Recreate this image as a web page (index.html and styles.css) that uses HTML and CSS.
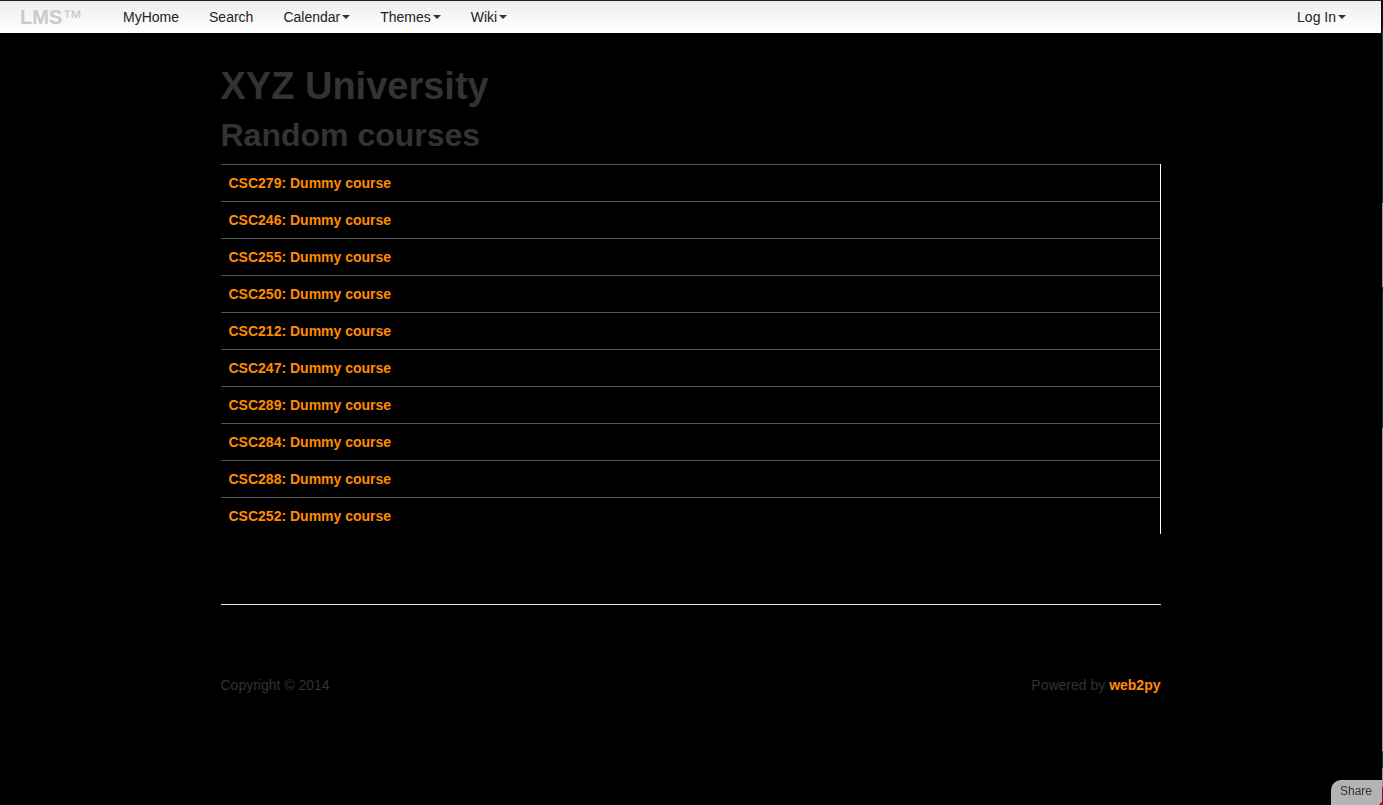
FILE: index.html
```html
<!DOCTYPE html>
<html lang="en">
<head>
<meta charset="utf-8">
<title>LMS</title>
<link rel="stylesheet" href="styles.css">
</head>
<body>
<header class="navbar">
  <a class="brand" href="#">LMS<span class="mark">™</span></a>
  <nav class="menu">
    <a class="item" href="#">MyHome</a>
    <a class="item" href="#">Search</a>
    <a class="item" href="#">Calendar<span class="caret"></span></a>
    <a class="item" href="#">Themes<span class="caret"></span></a>
    <a class="item" href="#">Wiki<span class="caret"></span></a>
  </nav>
  <a class="item login" href="#">Log In<span class="caret"></span></a>
</header>
<main class="container">
  <h1>XYZ University</h1>
  <h2>Random courses</h2>
  <table class="courses">
    <tbody>
      <tr><td><a href="#">CSC279: Dummy course</a></td></tr>
      <tr><td><a href="#">CSC246: Dummy course</a></td></tr>
      <tr><td><a href="#">CSC255: Dummy course</a></td></tr>
      <tr><td><a href="#">CSC250: Dummy course</a></td></tr>
      <tr><td><a href="#">CSC212: Dummy course</a></td></tr>
      <tr><td><a href="#">CSC247: Dummy course</a></td></tr>
      <tr><td><a href="#">CSC289: Dummy course</a></td></tr>
      <tr><td><a href="#">CSC284: Dummy course</a></td></tr>
      <tr><td><a href="#">CSC288: Dummy course</a></td></tr>
      <tr><td><a href="#">CSC252: Dummy course</a></td></tr>
    </tbody>
  </table>
</main>
<footer class="container footer">
  <span>Copyright © 2014</span>
  <span>Powered by <a href="#">web2py</a></span>
</footer>
<button class="share" type="button">Share</button>
<div class="edge"></div>
</body>
</html>
```
FILE: styles.css
```css
* { box-sizing: border-box; }

body {
  margin: 0;
  padding-right: 2px;
  background: #000;
  color: #333;
  font-family: "Liberation Sans", Arial, sans-serif;
  font-size: 14px;
  line-height: 20px;
}

a {
  color: #ff8c00;
  font-weight: bold;
  text-decoration: none;
}

.navbar {
  display: flex;
  align-items: center;
  height: 33px;
  padding: 0 20px;
  border-top: 1px solid #222;
  background: linear-gradient(#eee, #fff);
}

.brand {
  width: 88px;
  color: #c5cccb;
  font-size: 20px;
}

.mark { font-weight: normal; }

.menu { display: flex; }

.item {
  display: flex;
  align-items: center;
  padding: 0 15px;
  color: #222;
  font-weight: normal;
}

.login { margin-left: auto; }

.caret {
  margin-left: 2px;
  border: 4px solid transparent;
  border-top-color: #333;
  border-bottom: 0;
}

.container {
  width: 940px;
  max-width: 100%;
  margin: 0 auto;
}

h1, h2 {
  margin: 0;
  line-height: 40px;
}

h1 {
  padding: 33px 0 9px;
  font-size: 38px;
}

h2 {
  padding-bottom: 9px;
  font-size: 32px;
}

.courses {
  width: 100%;
  border-collapse: separate;
  border-spacing: 0;
  border-right: 1px solid #fff;
}

.courses td {
  padding: 8px;
  border-top: 1px solid #555;
}

.footer {
  display: flex;
  justify-content: space-between;
  margin-top: 70px;
  padding-top: 70px;
  border-top: 1px solid #dde4e3;
}

.share {
  position: fixed;
  right: 1px;
  bottom: 0;
  height: 25px;
  padding: 0 10px 4px 9px;
  border: 0;
  border-radius: 10px 0 0;
  background: linear-gradient(135deg, transparent 96%, #c8102e 96%), #b3b3b3;
  color: #333;
  font-family: inherit;
  font-size: 12px;
}

/* Strip along the right side of the window */
.edge {
  position: fixed;
  top: 0;
  right: 0;
  bottom: 0;
  width: 1px;
  background: linear-gradient(#111 0 28px, #24384a 28px 203px, #999 203px 287px, #111 287px 293px, #24384a 293px 428px, #999 428px 751px, #24384a 751px 768px, #8a95a0 768px 787px, #b00020 787px);
}
```
